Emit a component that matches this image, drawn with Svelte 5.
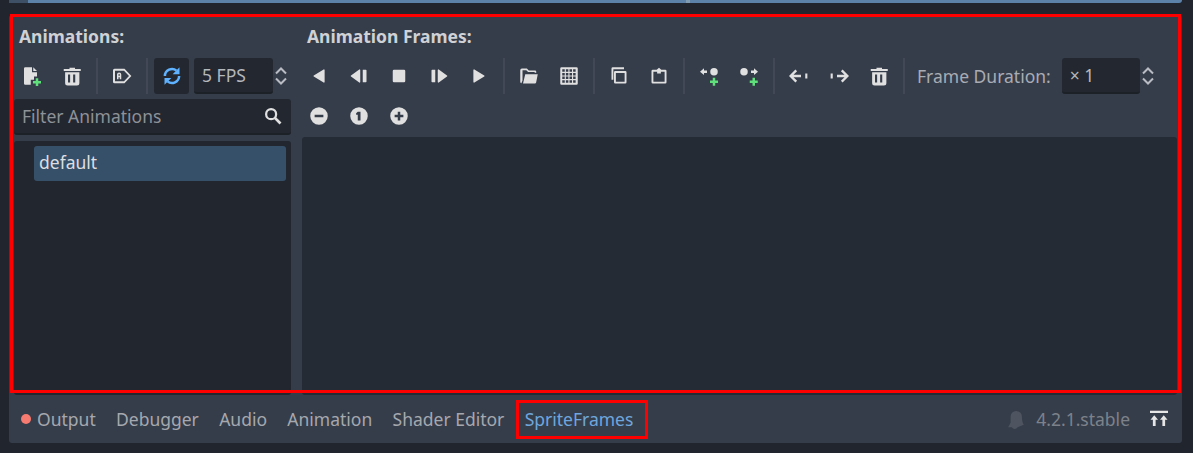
<script>
	const plus = (x, y) =>
		`M${x - 1} ${y - 3.2}h2v2.2h2.2v2h-2.2v2.2h-2v-2.2h-2.2v-2h2.2z`;

	function gridPath() {
		let d = 'M2 1h12a1 1 0 0 1 1 1v12a1 1 0 0 1-1 1H2a1 1 0 0 1-1-1V2a1 1 0 0 1 1-1z';
		for (let r = 0; r < 4; r++) {
			for (let c = 0; c < 4; c++) {
				d += `M${2.6 + c * 2.9} ${2.6 + r * 2.9}h2v2h-2z`;
			}
		}
		return d;
	}

	const trash =
		'M6 1.300v1H1.400V4h13.600V2.300h-4.600v-1zM2.500 5v8.500A2 2 0 0 0 4.500 15.500h7.400a2 2 0 0 0 2-2V5zm2.300 1.800h1.700v6.400H4.800zm4.100 0h1.700v6.400H8.900z';

	const icons = {
		newFile: { d: 'M2.600 1H8v4h4v3.400H9.600V11H7v4H2.600a1 1 0 0 1-1-1V2a1 1 0 0 1 1-1zM9 1l3 3H9z', green: plus(12, 13) },
		trash: { d: trash },
		label: { d: 'M2 2.200h8l5.500 5.800-5.500 5.800H2a1.200 1.200 0 0 1-1.200-1.200V3.400A1.200 1.200 0 0 1 2 2.200zM2.400 3.800v8.400h7.200l4-4.200-4-4.200zM4 10.500V6.800a1.700 1.700 0 0 1 3.400 0v3.700H6.200V9h-1v1.500zM5.200 7.800h1v-1a.5.5 0 0 0-1 0z' },
		first: { d: 'M12.500 3.200v9.600a.5.5 0 0 1-.8.4L3.800 8.400a.5.5 0 0 1 0-.8l7.900-4.800a.5.5 0 0 1 .8.4z' },
		stepBack: { d: 'M9 3.200v9.600a.5.5 0 0 1-.8.4L1.600 8.400a.5.5 0 0 1 0-.8l6.600-4.800a.5.5 0 0 1 .8.4zM11 3h2.400a.6.6 0 0 1 .6.6v8.800a.6.6 0 0 1-.6.6H11z' },
		stop: { d: 'M4 3h8a1 1 0 0 1 1 1v8a1 1 0 0 1-1 1H4a1 1 0 0 1-1-1V4a1 1 0 0 1 1-1z' },
		stepForward: { d: 'M7 3.200v9.600a.5.5 0 0 0 .8.4l6.600-4.800a.5.5 0 0 0 0-.8L7.800 2.800a.5.5 0 0 0-.8.4zM5 3H2.600a.6.6 0 0 0-.6.6v8.800a.6.6 0 0 0 .6.6H5z' },
		play: { d: 'M3.500 3.200v9.600a.5.5 0 0 0 .8.4l7.900-4.800a.5.5 0 0 0 0-.8L4.300 2.800a.5.5 0 0 0-.8.4z' },
		folder: { d: 'M2.300 2h4l1.500 1.500h5a1 1 0 0 1 1 1v.8h-1.300v-.5H7.300L5.800 3.300H2.800v8.200l-.9 2.200a1.200 1.200 0 0 1-.9-1.200V3.300A1.300 1.300 0 0 1 2.300 2zM5 6.500h10l-1.300 6.700a1 1 0 0 1-1 .8H3.200z' },
		grid: { d: gridPath() },
		copy: { d: 'M3 1a1 1 0 0 0-1 1v9h1.500V2.500H12V1zM5 4a1 1 0 0 0-1 1v8a1 1 0 0 0 1 1h8a1 1 0 0 0 1-1V5a1 1 0 0 0-1-1zm.5 1.500h7v7h-7z' },
		paste: { d: 'M3 3h3.200L8 1.300 9.800 3H13a1 1 0 0 1 1 1v9a1 1 0 0 1-1 1H3a1 1 0 0 1-1-1V4a1 1 0 0 1 1-1zM3.500 4.500v8h9v-8h-3V6h-3V4.500z' },
		insertBefore: { d: 'M.8 4.500L4 1.800v1.700h2.400v2H4v1.700zM12 1.500a3 3 0 1 0 0 6 3 3 0 0 0 0-6z', green: plus(12, 12.6) },
		insertAfter: { d: 'M15.200 4.500L12 1.800v1.700H9.600v2H12v1.700zM4 1.500a3 3 0 1 0 0 6 3 3 0 0 0 0-6z', green: plus(11.8, 12.6) },
		moveLeft: { s: 'M5.800 3.500L1.300 8l4.500 4.500M1.600 8h8', d: 'M13 6h1.700v4H13z' },
		moveRight: { s: 'M10.200 3.500L14.700 8l-4.500 4.500M14.400 8h-8', d: 'M1.300 6H3v4H1.300z' },
		minus: { d: 'M8 1a7 7 0 1 0 0 14A7 7 0 0 0 8 1zM4.500 7h7v2h-7z' },
		one: { d: 'M8 1a7 7 0 1 0 0 14A7 7 0 0 0 8 1zM7 4.500h2.200v7H7V7H5.700V5.800z' },
		add: { d: 'M8 1a7 7 0 1 0 0 14A7 7 0 0 0 8 1zM7 4.500h2V7h2.500v2H9v2.500H7V9H4.500V7H7z' }
	};

	const frameTools = [
		['first', 'stepBack', 'stop', 'stepForward', 'play'],
		['folder', 'grid'],
		['copy', 'paste'],
		['insertBefore', 'insertAfter'],
		['moveLeft', 'moveRight', 'trash']
	];

	const tabs = ['Output', 'Debugger', 'Audio', 'Animation', 'Shader Editor', 'SpriteFrames'];
</script>

{#snippet icon(name)}
	<span class="tool">
		<svg viewBox="0 0 16 16" width="20" height="20" fill-rule="evenodd">
			{#if icons[name].d}<path d={icons[name].d} fill="#e0e0e0" />{/if}
			{#if icons[name].s}<path d={icons[name].s} fill="none" stroke="#e0e0e0" stroke-width="1.900" />{/if}
			{#if icons[name].green}<path d={icons[name].green} fill="#5fe07a" />{/if}
		</svg>
	</span>
{/snippet}

{#snippet spinner()}
	<svg class="spin" viewBox="0 0 14 20" width="14" height="20" fill="none" stroke="#b9bcc2" stroke-width="2">
		<path d="M2 7.500L7 2.500l5 5M2 12.500l5 5 5-5" />
	</svg>
{/snippet}

<div class="editor">
	<div class="strip"><span class="strip-left"></span><span class="strip-grip"></span></div>

	<div class="panel">
		<div class="columns">
			<section class="col-left">
				<h3>Animations:</h3>
				<div class="toolbar left-tools">
					{@render icon('newFile')}
					{@render icon('trash')}
					<i class="sep"></i>
					{@render icon('label')}
					<i class="sep"></i>
					<span class="toggle">
						<svg viewBox="0 0 16 16" width="20" height="20" fill="none">
							<path d="M2.300 8a5.700 5.700 0 0 1 9.300-4.300M13.700 8a5.700 5.700 0 0 1-9.300 4.300" stroke="#5fb2ff" stroke-width="2" />
							<path d="M14 1v5.500H8.500zM2 15V9.500h5.500z" fill="#5fb2ff" />
						</svg>
					</span>
					<span class="field fps">5 FPS</span>
					{@render spinner()}
				</div>
				<div class="filter">
					<span>Filter Animations</span>
					<svg viewBox="0 0 16 16" width="20" height="20" fill="none" stroke="#e0e0e0">
						<circle cx="6.500" cy="6.500" r="4" stroke-width="1.800" />
						<path d="M9.500 9.500L14 14" stroke-width="2.200" />
					</svg>
				</div>
				<div class="tree">
					<div class="tree-item">default</div>
				</div>
			</section>

			<section class="col-right">
				<h3>Animation Frames:</h3>
				<div class="toolbar">
					{#each frameTools as group, i}
						{#if i > 0}<i class="sep"></i>{/if}
						{#each group as name}
							{@render icon(name)}
						{/each}
					{/each}
					<i class="sep"></i>
					<span class="duration-label">Frame Duration:</span>
					<span class="field duration">× 1</span>
					{@render spinner()}
				</div>
				<div class="toolbar zoom-tools">
					{@render icon('minus')}
					{@render icon('one')}
					{@render icon('add')}
				</div>
				<div class="frames"></div>
			</section>
		</div>

		<div class="bottom-bar">
			<i class="dot"></i>
			{#each tabs as tab}
				<span class="tab" class:active={tab === 'SpriteFrames'}>{tab}</span>
			{/each}
			<div class="status">
				<svg viewBox="0 0 16 16" width="20" height="20" fill="#4e5561">
					<path d="M9 1.500a4.500 4.500 0 0 1 4.500 4.500c0 3 .5 5 1.500 6.500l-5 2a2.500 2.500 0 0 1-4.500 0H2.500L4.500 11V6A4.500 4.500 0 0 1 9 1.500z" />
				</svg>
				<span class="version">4.2.1.stable</span>
				<svg class="expand" viewBox="0 0 16 16" width="20" height="20" fill="#e6e6e6">
					<path d="M.8 1.300h14.400v1.800H.8zM4.200 5l3 3.600H5.300v5H3.100v-5H1.200zM11.800 5l3 3.600h-1.900v5h-2.200v-5H8.800z" />
				</svg>
			</div>
		</div>
	</div>

	<!-- red annotation boxes from the screenshot -->
	<div class="mark mark-main"></div>
	<div class="mark mark-tab"></div>
</div>

<style>
	:global(body) {
		margin: 0;
		background: #20252e;
	}

	.editor {
		position: relative;
		width: 1193px;
		height: 453px;
		box-sizing: border-box;
		padding: 0 11px 10px 9px;
		display: flex;
		flex-direction: column;
		font-family: 'Noto Sans', sans-serif;
		font-size: 17.500px;
		overflow: hidden;
	}

	.strip {
		height: 3px;
		flex: none;
		display: flex;
		background: #5d82aa;
		border-radius: 0 0 3px 3px;
	}

	.strip-left {
		width: 19px;
		background: #3d5066;
	}

	.strip-grip {
		width: 4px;
		margin-left: 658px;
		background: #7f9cb2;
	}

	.panel {
		flex: 1;
		margin-top: 12px;
		background: #363d4a;
		border-radius: 3px;
		display: flex;
		flex-direction: column;
		padding: 0 5px;
		min-height: 0;
	}

	.columns {
		display: grid;
		grid-template-columns: 277px 875px;
		column-gap: 11px;
		height: 380px;
		flex: none;
	}

	section {
		display: flex;
		flex-direction: column;
		min-width: 0;
	}

	h3 {
		margin: 9px 0 10px 5px;
		height: 24px;
		line-height: 24px;
		font-size: 17.500px;
		font-weight: 700;
		color: #cfd1d5;
	}

	.toolbar {
		display: flex;
		align-items: center;
		gap: 8px;
		height: 36px;
		flex: none;
	}

	.col-right .toolbar {
		padding-left: 1px;
	}

	.left-tools {
		padding-left: 1.500px;
	}

	.tool {
		width: 32px;
		height: 32px;
		display: flex;
		align-items: center;
		justify-content: center;
		flex: none;
	}

	.sep {
		width: 2px;
		height: 36px;
		background: #424855;
		flex: none;
	}

	.toggle {
		width: 35px;
		height: 36px;
		margin-left: -1.500px;
		display: flex;
		align-items: center;
		justify-content: center;
		background: #232830;
		border-radius: 3px;
		flex: none;
	}

	.field {
		height: 36px;
		box-sizing: border-box;
		display: flex;
		align-items: center;
		padding-left: 8px;
		background: #232830;
		border-bottom: 2px solid #1c2027;
		border-radius: 3px;
		color: #b4b7bc;
		flex: none;
	}

	.fps {
		width: 79px;
		margin-left: -3px;
	}

	.spin {
		flex: none;
		margin-left: -7px;
	}

	.duration-label {
		color: #a9acb3;
		margin-left: 4px;
		margin-right: 3px;
		white-space: nowrap;
	}

	.duration {
		width: 78px;
	}

	.filter {
		height: 36px;
		margin-top: 5px;
		box-sizing: border-box;
		flex: none;
		display: flex;
		align-items: center;
		justify-content: space-between;
		padding: 0 8px;
		background: #232830;
		border-bottom: 2px solid #1c2027;
		border-radius: 3px;
		color: #8e9198;
	}

	.tree {
		flex: 1;
		margin-top: 6px;
		background: #21262f;
		border-radius: 3px;
		padding: 5px 5px 0 20px;
	}

	.tree-item {
		height: 35px;
		line-height: 33px;
		padding-left: 5px;
		background: #37506a;
		border-radius: 3px;
		color: #dcdee1;
	}

	.zoom-tools {
		height: 32px;
		margin-top: 6px;
		flex: none;
	}

	.frames {
		flex: 1;
		margin-top: 5px;
		background: #252b34;
		border-radius: 3px;
	}

	.bottom-bar {
		flex: 1;
		display: flex;
		align-items: center;
		padding-left: 7px;
		color: #a5a8ae;
	}

	.dot {
		width: 10px;
		height: 10px;
		border-radius: 50%;
		background: #f77b70;
		margin-right: 6px;
		flex: none;
	}

	.tab {
		margin-right: 20.300px;
		white-space: nowrap;
	}

	.tab.active {
		color: #6ea6dd;
	}

	.status {
		margin-left: auto;
		display: flex;
		align-items: center;
		gap: 11px;
		padding-right: 8px;
	}

	.version {
		color: #7d828a;
	}

	.expand {
		margin-left: 8px;
	}

	.mark {
		position: absolute;
		box-sizing: border-box;
		border: 3px solid #f00;
		pointer-events: none;
	}

	.mark-main {
		left: 10px;
		top: 14px;
		width: 1171px;
		height: 379px;
	}

	.mark-tab {
		left: 516px;
		top: 400px;
		width: 132px;
		height: 39px;
	}
</style>
